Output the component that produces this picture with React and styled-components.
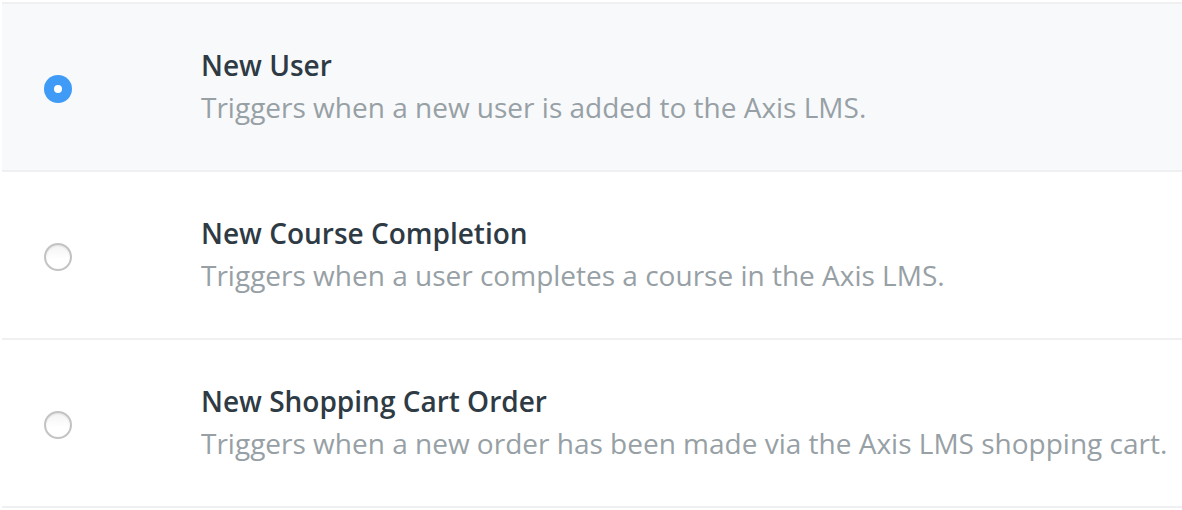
import React, { useState } from 'react';
import styled, { createGlobalStyle } from 'styled-components';

const GlobalStyle = createGlobalStyle`
    html, body {
        margin: 0;
        padding: 0;
        background: #fff;
    }
    body {
        font-family: 'Open Sans', 'Noto Sans', sans-serif;
        -webkit-font-smoothing: antialiased;
    }
`;

const triggers = [
    {
        id: 'new-user',
        title: 'New User',
        description: 'Triggers when a new user is added to the Axis LMS.',
    },
    {
        id: 'course-completion',
        title: 'New Course Completion',
        description: 'Triggers when a user completes a course in the Axis LMS.',
    },
    {
        id: 'shopping-cart-order',
        title: 'New Shopping Cart Order',
        description: 'Triggers when a new order has been made via the Axis LMS shopping cart.',
    },
];

function App() {
    const [selected, setSelected] = useState('new-user');

    return (
        <>
            <GlobalStyle />
            <Page>
                <TriggerList>
                    {triggers.map((trigger) => (
                        <TriggerRow
                            key={trigger.id}
                            $active={selected === trigger.id}
                            onClick={() => setSelected(trigger.id)}
                        >
                            <RadioCell>
                                <Radio $checked={selected === trigger.id} />
                            </RadioCell>
                            <TriggerText>
                                <TriggerTitle>{trigger.title}</TriggerTitle>
                                <TriggerDescription>{trigger.description}</TriggerDescription>
                            </TriggerText>
                        </TriggerRow>
                    ))}
                </TriggerList>
            </Page>
        </>
    );
}
export default App;

const Page = styled.div`
    padding: 2px 0 0 2px;
    width: 1180px;
    height: 508px;
    overflow: hidden;
`;

const TriggerList = styled.ul`
    list-style: none;
    margin: 0;
    padding: 0;
    border-top: 2px solid #eff0f1;
`;

const TriggerRow = styled.li`
    display: grid;
    grid-template-columns: 199px 1fr;
    align-items: center;
    height: 166px;
    border-bottom: 2px solid #eff0f1;
    background: ${(p) => (p.$active ? '#f8f9fb' : '#fff')};
    cursor: pointer;
`;

const RadioCell = styled.div`
    display: flex;
    align-items: center;
    padding-left: 42px;
    padding-top: 4px;
`;

const Radio = styled.span`
    box-sizing: border-box;
    display: block;
    width: 28px;
    height: 28px;
    border-radius: 50%;
    position: relative;
    background: ${(p) => (p.$checked ? '#3f9bf6' : 'linear-gradient(180deg, #f4f4f4 0%, #ffffff 60%)')};
    border: ${(p) => (p.$checked ? 'none' : '2px solid #c3c3c3')};
    box-shadow: ${(p) => (p.$checked ? 'none' : 'inset 0 1px 2px rgba(0, 0, 0, 0.08)')};

    &::after {
        content: '';
        display: ${(p) => (p.$checked ? 'block' : 'none')};
        position: absolute;
        top: 50%;
        left: 50%;
        width: 8px;
        height: 8px;
        margin: -4px 0 0 -4px;
        border-radius: 50%;
        background: #fff;
    }
`;

const TriggerText = styled.div`
    display: flex;
    flex-direction: column;
    padding-bottom: 2px;
    font-size: 28px;
    line-height: 42px;
`;

const TriggerTitle = styled.div`
    font-weight: 600;
    color: #2e3a44;
`;

const TriggerDescription = styled.div`
    color: #97a0a5;
    white-space: nowrap;
`;
